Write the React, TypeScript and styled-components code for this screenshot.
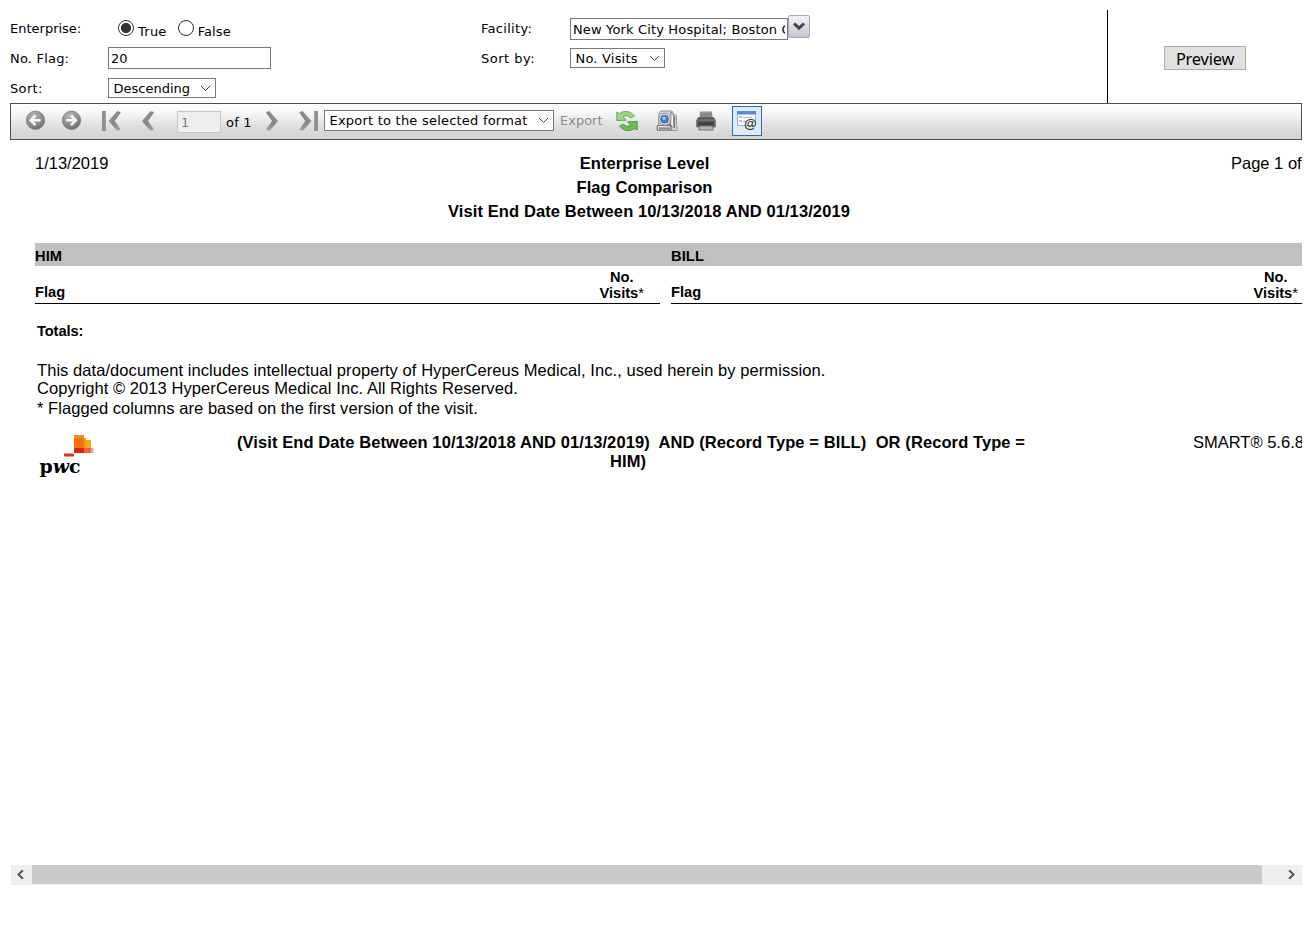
import React from "react";
import styled, { createGlobalStyle } from "styled-components";

const Global = createGlobalStyle`
  * { box-sizing: border-box; }
  body { margin: 0; background: #fff; color: #000; font-family: "DejaVu Sans", Verdana, sans-serif; font-size: 13px; overflow: hidden; }
`;

const Page = styled.main`
  width: 1312px;
  height: 937px;
  padding: 10px 10px 0;
`;

const Parameters = styled.section`
  display: flex;
  height: 93px;
`;

const Fields = styled.div`
  display: grid;
  grid-template-columns: 98px 373px 89px 1fr;
  grid-template-rows: 33px 30px 30px;
  width: 1098px;
  border-right: 1px solid #000;
`;

const Cell = styled.div<{ $top?: number; $left?: number }>`
  display: flex;
  align-items: flex-start;
  padding-top: ${(p) => p.$top ?? 0}px;
  padding-left: ${(p) => p.$left ?? 0}px;
`;

const Label = styled.label<{ $track?: number }>`
  line-height: 16px;
  white-space: nowrap;
  letter-spacing: ${(p) => p.$track ?? 0}px;
`;

const Radio = styled.span<{ $checked?: boolean }>`
  width: 16px;
  height: 16px;
  border: 1px solid #333;
  border-radius: 50%;
  background: ${(p) => (p.$checked ? "radial-gradient(circle, #333 4.7px, #fff 5.4px)" : "#fff")};
`;

const RadioText = styled(Label)`
  margin: 4px 11px 0 4px;
`;

const TextBox = styled.div<{ $width: number }>`
  width: ${(p) => p.$width}px;
  height: 22px;
  padding: 0 2px;
  border: 1px solid #7a7a7a;
  background: #fff;
`;

const Clip = styled.div<{ $track?: number }>`
  overflow: hidden;
  white-space: nowrap;
  line-height: 20px;
  padding-top: 1px;
  height: 20px;
  letter-spacing: ${(p) => p.$track ?? 0}px;
`;

const SelectBox = styled.div<{ $width: number; $height: number; $track?: number }>`
  display: flex;
  align-items: center;
  justify-content: space-between;
  width: ${(p) => p.$width}px;
  height: ${(p) => p.$height}px;
  padding: 0 4px 0 4.5px;
  border: 1px solid #7a7a7a;
  background: #fff;
  white-space: nowrap;
  letter-spacing: ${(p) => p.$track ?? 0}px;
`;

const DropButton = styled.button`
  display: flex;
  align-items: center;
  justify-content: center;
  width: 22px;
  height: 23px;
  padding: 0;
  border: 1px solid #a9a9ba;
  border-radius: 2px;
  background: linear-gradient(#f2f2f7, #dcdce6 50%, #c6c6d4);
`;

const Actions = styled.div`
  flex: 1;
  padding: 36px 0 0 56px;
`;

const PreviewButton = styled.button`
  display: block;
  width: 82px;
  height: 24px;
  padding: 1px 0 0;
  border: 1px solid #adadad;
  background: #e1e1e1;
  color: #000;
  font: 16.4px/20px "Noto Sans", sans-serif;
  letter-spacing: -0.2px;
`;

const Toolbar = styled.nav`
  display: flex;
  align-items: flex-start;
  height: 37px;
  border: 1px solid #4f4f4f;
  background: linear-gradient(#fff, #f4f4f4 30%, #dedede 65%, #d3d3d3);
`;

const Slot = styled.div<{ $left: number; $top?: number; $width?: number }>`
  margin-left: ${(p) => p.$left}px;
  padding-top: ${(p) => p.$top ?? 0}px;
  width: ${(p) => (p.$width ? `${p.$width}px` : "auto")};
  line-height: 16px;
  white-space: nowrap;
  flex: none;
  svg { display: block; }
`;

const PageNumber = styled.div`
  width: 44px;
  height: 22px;
  padding: 0 3px;
  border: 1px solid #c6c6c6;
  background: #efefef;
  color: #787878;
  line-height: 22px;
`;

const Muted = styled.span`
  color: #8b8b8b;
`;

const ActiveTool = styled.div`
  width: 30px;
  height: 30px;
  padding: 4px 4px;
  border: 1px solid #3169ad;
  background: #dcebf5;
`;

const Report = styled.section`
  height: 725px;
  padding-left: 25px;
  overflow: hidden;
  font: 16.5px/24px "Liberation Sans", Arial, sans-serif;
`;

const ReportHead = styled.header`
  display: grid;
  grid-template-columns: 300px 619px 277px 1fr;
  height: 103px;
  padding-top: 11px;
  white-space: nowrap;
`;

const Titles = styled.div`
  text-align: center;
  font-weight: bold;
`;

const Title = styled.div<{ $shift?: number; $track?: number }>`
  padding-left: ${(p) => p.$shift ?? 0}px;
  letter-spacing: ${(p) => p.$track ?? 0}px;
`;

const Band = styled.div`
  display: grid;
  grid-template-columns: 636px 1fr;
  height: 23px;
  background: #c0c0c0;
  font-size: 14.67px;
  font-weight: bold;
  line-height: 26px;
  letter-spacing: 0.1px;
`;

const Columns = styled.div`
  display: grid;
  grid-template-columns: 625px 631px;
  column-gap: 11px;
  height: 38px;
`;

const ColumnHead = styled.div<{ $inset: number }>`
  display: flex;
  justify-content: space-between;
  align-items: flex-end;
  padding: 0 ${(p) => p.$inset}px 2px 0;
  border-bottom: 1px solid #000;
  font-size: 14.67px;
  font-weight: bold;
  line-height: 16px;
`;

const FlagLabel = styled.span`
  padding-bottom: 1px;
`;

const Visits = styled.span`
  text-align: center;
  sup { font-size: inherit; font-weight: normal; vertical-align: baseline; }
`;

const Totals = styled.div`
  padding: 19px 0 0 2px;
  height: 57px;
  font-size: 14.67px;
  font-weight: bold;
  line-height: 17px;
  letter-spacing: -0.1px;
`;

const Legal = styled.p<{ $height: number; $track?: number }>`
  margin: 0 0 0 2px;
  height: ${(p) => p.$height}px;
  line-height: 18px;
  white-space: nowrap;
  letter-spacing: ${(p) => p.$track ?? 0}px;
`;

const ReportFoot = styled.footer`
  display: grid;
  grid-template-columns: 198px 796px 164px 1fr;
  padding-top: 14px;
  line-height: 19px;
  white-space: nowrap;
`;

const Criteria = styled.div`
  font-weight: bold;
  letter-spacing: 0.095px;
`;

const CriteriaLine = styled.div<{ $trail?: number }>`
  padding-right: ${(p) => p.$trail ?? 0}px;
  text-align: center;
  white-space: pre;
`;

const Logo = styled.div`
  padding: 2px 0 0 4px;
  svg { display: block; }
`;

const Scrollbar = styled.div`
  display: grid;
  grid-template-columns: 21px 1230px 40px;
  height: 20px;
  margin-left: 1px;
  background: #efefef;
`;

const Thumb = styled.div`
  height: 19px;
  background: #cbcbcb;
`;

const ScrollEnd = styled.div<{ $left: number }>`
  padding: 5px 0 0 ${(p) => p.$left}px;
  svg { display: block; }
`;

const Caret = () => (
  <svg width="11" height="7" viewBox="0 0 11 7" fill="none" stroke="#444" strokeWidth="1">
    <path d="M1 1l4.5 4.5L10 1" />
  </svg>
);

const RoundArrow = ({ flip }: { flip?: boolean }) => (
  <svg width="20" height="20" viewBox="0 0 20 20">
    <defs>
      <radialGradient id="ball" cx="0.4" cy="0.25" r="0.8">
        <stop offset="0" stopColor="#b4b4b4" />
        <stop offset="0.6" stopColor="#8e8e8e" />
        <stop offset="1" stopColor="#666" />
      </radialGradient>
    </defs>
    <circle cx="9.500" cy="10.300" r="9.200" fill="url(#ball)" stroke="#828282" strokeWidth="0.8" />
    <g transform={flip ? "translate(19 .3) scale(-1 1)" : "translate(-.5 .3)"}>
      <path d="M10 5.200L5.200 10l4.800 4.800M5.500 10h9.500" fill="none" stroke="#f6f6f6" strokeWidth="2.5" />
    </g>
  </svg>
);

const Chevron = ({ flip, bar }: { flip?: boolean; bar?: boolean }) => {
  const width = bar ? 20 : 14;
  return (
    <svg width={width} height="20" viewBox={`0 0 ${width} 20`}>
      <defs>
        <linearGradient id="steel" x1="0" x2="1" y2="1">
          <stop offset="0" stopColor="#a4a4a4" />
          <stop offset="0.5" stopColor="#858585" />
          <stop offset="1" stopColor="#a8a8a8" />
        </linearGradient>
      </defs>
      <g transform={flip ? `translate(${width} 0) scale(-1 1)` : undefined}>
        {bar && <path d="M0 0h3.800v20H0z" fill="#8f8f8f" />}
        <path
          transform={bar ? "translate(6 0)" : "translate(.3 0)"}
          d="M9.200.3Q11 .2 12.800 1.400L6.700 10l6.100 8.600Q11 19.800 9.200 19.700L.5 10z"
          fill="url(#steel)"
        />
      </g>
    </svg>
  );
};

const refreshArrow = "M.8 2l2.600 1.600C7.500.3 14.500.6 18.500 6l-4 2C12.500 5.400 9.500 5 7.300 7l3 3.200L.8 10.600z";

const RefreshIcon = () => (
  <svg width="22" height="22" viewBox="0 0 22 22" strokeWidth="0.8" strokeLinejoin="round">
    <path d={refreshArrow} fill="#9ad684" stroke="#4f9f3c" />
    <path transform="rotate(180 11 11)" d={refreshArrow} fill="#6cbf50" stroke="#3c8d2c" />
  </svg>
);

const PageSetupIcon = () => (
  <svg width="22" height="22" viewBox="0 0 22 22">
    <path d="M3 2.500L5 1h11l2 3 2.500 1.500v10l.5 1v4H1v-4l1.500-1.500z" fill="#d2d2d2" stroke="#999" />
    <path d="M15 2l2.500 4v11l-3 2z" fill="#f2f2f2" stroke="#8c8c8c" />
    <path d="M18.500 6v12" stroke="#777" />
    <path d="M1.500 15.500h13l1 4.500h-14z" fill="#e4e4e4" stroke="#777" />
    <path d="M3 18.200h11M12 13l4 4" stroke="#666" strokeWidth="1.2" />
    <circle cx="8.500" cy="9.200" r="5.900" fill="#e3e8ec" stroke="#909090" />
    <circle cx="8.500" cy="9.200" r="3.900" fill="#4682c8" stroke="#2f66a8" />
    <circle cx="8" cy="8.300" r="1.800" fill="#9fc7ee" />
  </svg>
);

const PrinterIcon = () => (
  <svg width="20" height="20" viewBox="0 0 20 20">
    <path d="M4.500 1h11l.5 7H4z" fill="#a2a2a2" stroke="#858585" />
    <path d="M5 3h10M5 5h10" stroke="#6e6e6e" />
    <path d="M2.500 6.500h15l1.700 2.500v7H.8V9z" fill="#555" stroke="#666" />
    <path d="M1 9h18" stroke="#8c8c8c" />
    <path d="M3 11.500h14v4H3z" fill="#3e3e3e" />
    <path d="M3.500 15h13l.7 4H2.800z" fill="#a4a4a4" stroke="#7c7c7c" />
    <path d="M4.500 17h11" stroke="#ccc" />
  </svg>
);

const ParametersIcon = () => (
  <svg width="21" height="20" viewBox="0 0 21 20">
    <path d="M.5.5h18v14H.5z" fill="#f7fbff" stroke="#93b3df" />
    <path d="M0 0h19v3.500H0z" fill="#5b8ad0" />
    <path d="M2 6h3M2 10h3" stroke="#888" />
    <path d="M6 6.500h9M6 10.500h3" stroke="#bbb" />
    <text x="7" y="17" fontFamily="Liberation Sans, sans-serif" fontSize="13" fontWeight="bold" fill="#333">@</text>
  </svg>
);

const PwcLogo = () => (
  <svg width="58" height="48" viewBox="0 0 58 48">
    <path d="M35 0h10v3h2v12H35z" fill="#f47b0b" />
    <path d="M35 0h10v3H35z" fill="#f98b1e" />
    <path d="M35 3h9v10h-9z" fill="#f27009" />
    <path d="M45 5h7v8h-7z" fill="#faab13" />
    <path d="M45 3h2v10h-2z" fill="#f19a22" />
    <path d="M35 13h10v5H35z" fill="#d92608" />
    <path d="M45 13h7v5h-7z" fill="#f0642a" />
    <path d="M52 13h2.500v5H52z" fill="#ee9ed0" />
    <path d="M25 18.500h10v3H25z" fill="#d8321d" />
    <text x="0.600" y="37.700" fontFamily="DejaVu Serif, serif" fontSize="18.500" fontWeight="bold" textLength="41" lengthAdjust="spacingAndGlyphs">
      p<tspan fontStyle="italic">w</tspan>c
    </text>
  </svg>
);

const ScrollArrow = ({ flip }: { flip?: boolean }) => (
  <svg width="8" height="9" viewBox="0 0 8 9" fill="none" stroke="#555" strokeWidth="2">
    <path d={flip ? "M1 .3l4.500 4.200L1 8.700" : "M7 .3L2.500 4.500 7 8.700"} />
  </svg>
);

const VisitsHeading = () => (
  <Visits>No.<br />Visits<sup>*</sup></Visits>
);

export default function App() {
  return (
    <>
      <Global />
      <Page>
        <Parameters>
          <Fields>
            <Cell $top={11}><Label>Enterprise:</Label></Cell>
            <Cell $top={10} $left={10}>
              <Radio $checked /><RadioText $track={0.25}>True</RadioText>
              <Radio /><RadioText $track={0.1}>False</RadioText>
            </Cell>
            <Cell $top={11}><Label $track={0.3}>Facility:</Label></Cell>
            <Cell $top={5}>
              <Cell $top={3}><TextBox $width={218}><Clip $track={0.15}>New York City Hospital; Boston Children</Clip></TextBox></Cell>
              <DropButton aria-label="Choose facilities">
                <svg width="12" height="9" viewBox="0 0 12 9" fill="none" stroke="#444" strokeWidth="3"><path d="M1 1.500l5 4.700 5-4.700" /></svg>
              </DropButton>
            </Cell>
            <Cell $top={8}><Label $track={0.2}>No. Flag:</Label></Cell>
            <Cell $top={4}><TextBox $width={163}><Clip>20</Clip></TextBox></Cell>
            <Cell $top={8}><Label $track={0.5}>Sort by:</Label></Cell>
            <Cell $top={5}><SelectBox $width={95} $height={20} $track={0.2}>No. Visits<Caret /></SelectBox></Cell>
            <Cell $top={8}><Label $track={0.35}>Sort:</Label></Cell>
            <Cell $top={5}><SelectBox $width={108} $height={20}>Descending<Caret /></SelectBox></Cell>
          </Fields>
          <Actions><PreviewButton>Preview</PreviewButton></Actions>
        </Parameters>
        <Toolbar>
          <Slot $left={15} $top={6}><RoundArrow /></Slot>
          <Slot $left={16} $top={6}><RoundArrow flip /></Slot>
          <Slot $left={20} $top={7}><Chevron bar /></Slot>
          <Slot $left={19} $top={7}><Chevron /></Slot>
          <Slot $left={22} $top={7}><PageNumber>1</PageNumber></Slot>
          <Slot $left={5} $top={11} $width={39}><Label $track={0.2}>of 1</Label></Slot>
          <Slot $left={0} $top={7}><Chevron flip /></Slot>
          <Slot $left={19} $top={7}><Chevron flip bar /></Slot>
          <Slot $left={6} $top={6}><SelectBox $width={230} $height={21} $track={0.22}>Export to the selected format<Caret /></SelectBox></Slot>
          <Slot $left={6} $top={9} $width={56}><Muted>Export</Muted></Slot>
          <Slot $left={0} $top={6}><RefreshIcon /></Slot>
          <Slot $left={18} $top={6}><PageSetupIcon /></Slot>
          <Slot $left={18} $top={7}><PrinterIcon /></Slot>
          <Slot $left={16} $top={2}><ActiveTool><ParametersIcon /></ActiveTool></Slot>
        </Toolbar>
        <Report>
          <ReportHead>
            <span>1/13/2019</span>
            <Titles>
              <Title $track={0.08}>Enterprise Level</Title>
              <Title $track={0.08}>Flag Comparison</Title>
              <Title $shift={9} $track={0.1}>Visit End Date Between 10/13/2018 AND 01/13/2019</Title>
            </Titles>
            <span />
            <span>Page 1 of 1</span>
          </ReportHead>
          <Band><span>HIM</span><span>BILL</span></Band>
          <Columns>
            <ColumnHead $inset={16}><FlagLabel>Flag</FlagLabel><VisitsHeading /></ColumnHead>
            <ColumnHead $inset={4}><FlagLabel>Flag</FlagLabel><VisitsHeading /></ColumnHead>
          </Columns>
          <Totals>Totals:</Totals>
          <Legal $height={18} $track={0.066}>This data/document includes intellectual property of HyperCereus Medical, Inc., used herein by permission.</Legal>
          <Legal $height={20} $track={0.075}>Copyright © 2013 HyperCereus Medical Inc. All Rights Reserved.</Legal>
          <Legal $height={20} $track={0.055}>* Flagged columns are based on the first version of the visit.</Legal>
          <ReportFoot>
            <Logo><PwcLogo /></Logo>
            <Criteria>
              <CriteriaLine>{"(Visit End Date Between 10/13/2018 AND 01/13/2019)  AND (Record Type = BILL)  OR (Record Type ="}</CriteriaLine>
              <CriteriaLine $trail={6}>HIM)</CriteriaLine>
            </Criteria>
            <span />
            <span>SMART® 5.6.8</span>
          </ReportFoot>
        </Report>
        <Scrollbar>
          <ScrollEnd $left={5}><ScrollArrow /></ScrollEnd>
          <Thumb />
          <ScrollEnd $left={26}><ScrollArrow flip /></ScrollEnd>
        </Scrollbar>
      </Page>
    </>
  );
}
